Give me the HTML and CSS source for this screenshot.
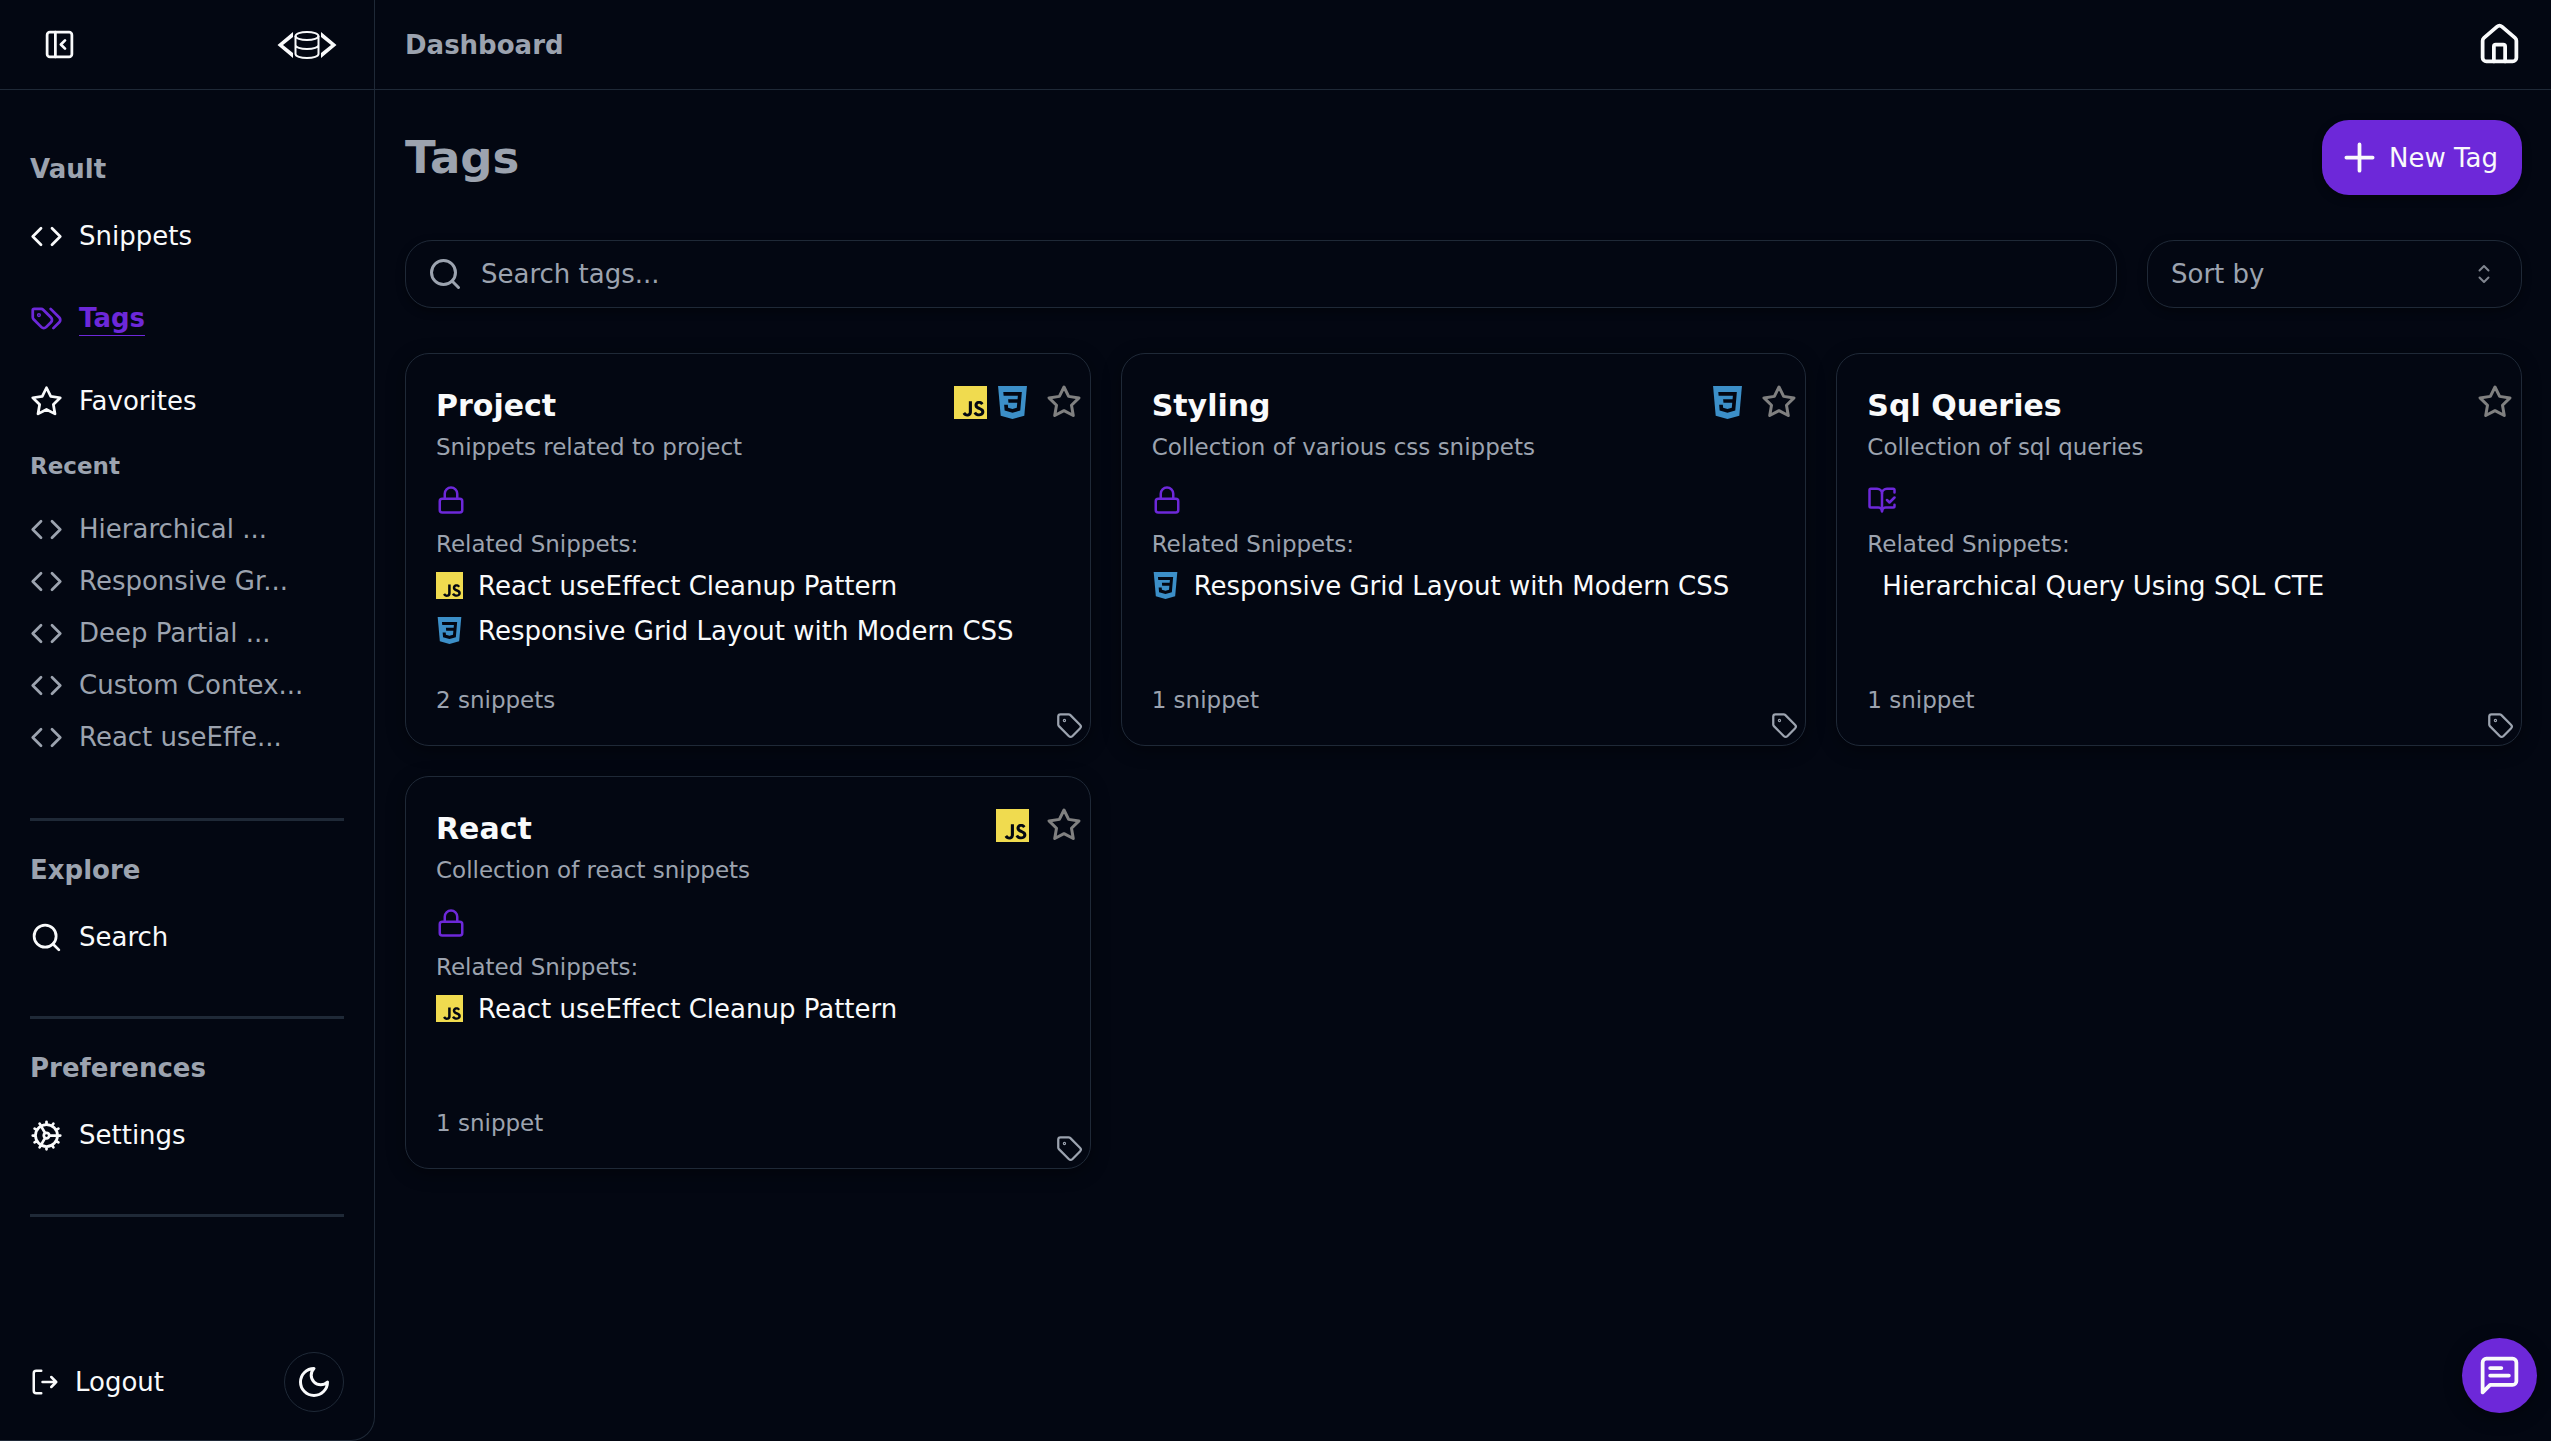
FILE: index.html
```html
<!DOCTYPE html>
<html lang="en">

<head>
    <meta charset="UTF-8">
    <meta name="viewport" content="width=device-width, initial-scale=1.0">
    <title>Tags</title>
    <link rel="stylesheet" href="styles.css">
</head>

<body>
    <!-- icon sprite -->
    <svg class="sprite" xmlns="http://www.w3.org/2000/svg">
        <symbol id="i-code" viewBox="0 0 24 24">
            <path d="m16 18 6-6-6-6M8 6l-6 6 6 6" />
        </symbol>
        <symbol id="i-tags" viewBox="0 0 24 24">
            <path d="m15 5 6.3 6.3a2.4 2.4 0 0 1 0 3.4L17 19" />
            <path d="M9.586 5.586A2 2 0 0 0 8.172 5H3a1 1 0 0 0-1 1v5.172a2 2 0 0 0 .586 1.414L8.29 18.29a2.426 2.426 0 0 0 3.42 0l3.58-3.58a2.426 2.426 0 0 0 0-3.42z" />
            <circle cx="6.5" cy="9.5" r=".5" />
        </symbol>
        <symbol id="i-star" viewBox="0 0 24 24">
            <path d="M12 2l3.09 6.26L22 9.27l-5 4.87 1.18 6.88L12 17.77l-6.18 3.25L7 14.14 2 9.27l6.91-1.01z" />
        </symbol>
        <symbol id="i-search" viewBox="0 0 24 24">
            <circle cx="11" cy="11" r="8" />
            <path d="m21 21-4.3-4.3" />
        </symbol>
        <symbol id="i-cog" viewBox="0 0 24 24">
            <path d="M12 20a8 8 0 1 0 0-16 8 8 0 0 0 0 16ZM12 14a2 2 0 1 0 0-4 2 2 0 0 0 0 4ZM12 2v2M12 22v-2M17 20.66l-1-1.73M11 10.27 7 3.34M20.66 17l-1.73-1M3.34 7l1.73 1M14 12h8M2 12h2M20.66 7l-1.73 1M3.34 17l1.73-1M17 3.34l-1 1.73M11 13.73l-4 6.93" />
        </symbol>
        <symbol id="i-lock" viewBox="0 0 24 24">
            <rect x="3" y="11" width="18" height="11" rx="2" />
            <path d="M7 11V7a5 5 0 0 1 10 0v4" />
        </symbol>
        <symbol id="i-book" viewBox="0 0 24 24">
            <path d="M12 21V7M16 12l2 2 4-4" />
            <path d="M22 6V4a1 1 0 0 0-1-1h-5a4 4 0 0 0-4 4 4 4 0 0 0-4-4H3a1 1 0 0 0-1 1v13a1 1 0 0 0 1 1h6a3 3 0 0 1 3 3 3 3 0 0 1 3-3h6a1 1 0 0 0 1-1v-1.3" />
        </symbol>
        <symbol id="i-tag" viewBox="0 0 24 24">
            <path d="M12.586 2.586A2 2 0 0 0 11.172 2H4a2 2 0 0 0-2 2v7.172a2 2 0 0 0 .586 1.414l8.704 8.704a2.426 2.426 0 0 0 3.42 0l6.58-6.58a2.426 2.426 0 0 0 0-3.42z" />
            <circle cx="7.5" cy="7.5" r=".5" />
        </symbol>
        <symbol id="i-js" viewBox="0 0 24 24">
            <path fill="#f0db4f" stroke="none" d="M0 0h24v24H0z" />
            <path fill="#030712" stroke="none" d="M22.034 18.276c-.175-1.095-.888-2.015-3.003-2.873-.736-.345-1.554-.585-1.797-1.14-.091-.33-.105-.51-.046-.705.15-.646.915-.84 1.515-.66.39.12.75.42.976.9 1.034-.676 1.034-.676 1.755-1.125-.27-.42-.404-.601-.586-.78-.63-.705-1.469-1.065-2.834-1.034l-.705.089c-.676.165-1.32.525-1.71 1.005-1.14 1.291-.811 3.541.569 4.471 1.365 1.02 3.361 1.244 3.616 2.205.24 1.17-.87 1.545-1.966 1.41-.811-.18-1.26-.586-1.755-1.336l-1.83 1.051c.21.48.45.689.81 1.109 1.74 1.756 6.09 1.666 6.871-1.004.029-.09.24-.705.074-1.65zm-8.983-7.245h-2.248c0 1.938-.009 3.864-.009 5.805 0 1.232.063 2.363-.138 2.711-.33.689-1.18.601-1.566.48-.396-.196-.597-.466-.83-.855-.063-.105-.11-.196-.127-.196l-1.825 1.125c.305.63.75 1.172 1.324 1.517.855.51 2.004.675 3.207.405.783-.226 1.458-.691 1.811-1.411.51-.93.402-2.07.397-3.346.012-2.054 0-4.109 0-6.179z" />
        </symbol>
        <symbol id="i-css" viewBox="0 0 24 24">
            <path fill="#3c8fc8" stroke="none" d="M1.5 0h21l-1.91 21.563L11.977 24l-8.565-2.438z" />
            <path fill="#030712" stroke="none" d="M5.3 4.4h13.5l-1.16 13.5-5.67 1.6-5.68-1.6-.37-4.2h2.7l.2 2.16 3.14.86 3.16-.86.33-3.66H9.05l-.24-2.64h6.88l.23-2.56H5.55z" />
        </symbol>
    </svg>

    <div class="wrapper">
        <aside class="sidebar">
            <div class="sidebarTop">
                <button class="iconBtn" aria-label="Collapse sidebar">
                    <svg class="icon" viewBox="0 0 24 24">
                        <rect x="3" y="3" width="18" height="18" rx="2" />
                        <path d="M9 3v18M16 15l-3-3 3-3" />
                    </svg>
                </button>
                <svg class="logo" viewBox="0 0 60 36">
                    <path class="solid" d="M16 5v5L6 18l10 8v5L.5 18zM44 5v5l10 8-10 8v5l15.5-13z" />
                    <ellipse cx="30" cy="9" rx="11.5" ry="4" />
                    <path d="M18.5 9v18c0 2.200 5 4 11.500 4s11.500-1.800 11.500-4V9M18.500 18c0 2.200 5 4 11.500 4s11.500-1.800 11.500-4" />
                </svg>
            </div>

            <nav class="menu">
                <section class="group">
                    <h2>Vault</h2>
                    <a class="navItem" href="#"><svg class="icon"><use href="#i-code" /></svg>Snippets</a>
                    <a class="navItem active" href="#"><svg class="icon"><use href="#i-tags" /></svg><span>Tags</span></a>
                    <a class="navItem" href="#"><svg class="icon"><use href="#i-star" /></svg>Favorites</a>
                    <h3>Recent</h3>
                    <ul class="recent">
                        <li><a href="#"><svg class="icon"><use href="#i-code" /></svg>Hierarchical ...</a></li>
                        <li><a href="#"><svg class="icon"><use href="#i-code" /></svg>Responsive Gr...</a></li>
                        <li><a href="#"><svg class="icon"><use href="#i-code" /></svg>Deep Partial ...</a></li>
                        <li><a href="#"><svg class="icon"><use href="#i-code" /></svg>Custom Contex...</a></li>
                        <li><a href="#"><svg class="icon"><use href="#i-code" /></svg>React useEffe...</a></li>
                    </ul>
                </section>
                <section class="group">
                    <h2>Explore</h2>
                    <a class="navItem" href="#"><svg class="icon"><use href="#i-search" /></svg>Search</a>
                </section>
                <section class="group">
                    <h2>Preferences</h2>
                    <a class="navItem" href="#"><svg class="icon"><use href="#i-cog" /></svg>Settings</a>
                </section>
            </nav>

            <div class="sidebarBottom">
                <button class="logoutBtn">
                    <svg class="icon icon30" viewBox="0 0 24 24">
                        <path d="M9 21H5a2 2 0 0 1-2-2V5a2 2 0 0 1 2-2h4M10 12h11M17 8l4 4-4 4" />
                    </svg>Logout
                </button>
                <button class="themeBtn" aria-label="Dark mode">
                    <svg class="icon icon36" viewBox="0 0 24 24">
                        <path d="M12 3a6 6 0 0 0 9 9 9 9 0 1 1-9-9Z" />
                    </svg>
                </button>
            </div>
        </aside>

        <div class="page">
            <header class="topbar">
                <span class="crumb">Dashboard</span>
                <a class="homeLink" href="#" aria-label="Home">
                    <svg class="icon icon45" viewBox="0 0 24 24">
                        <path d="M15 21v-8a1 1 0 0 0-1-1h-4a1 1 0 0 0-1 1v8" />
                        <path d="M3 10a2 2 0 0 1 .709-1.528l7-6a2 2 0 0 1 2.582 0l7 6A2 2 0 0 1 21 10v9a2 2 0 0 1-2 2H5a2 2 0 0 1-2-2z" />
                    </svg>
                </a>
            </header>

            <main class="content">
                <div class="titleRow">
                    <h1>Tags</h1>
                    <button class="newBtn">
                        <svg class="icon icon45" viewBox="0 0 24 24"><path d="M5 12h14M12 5v14" /></svg>New Tag
                    </button>
                </div>

                <div class="filters">
                    <div class="searchBox">
                        <svg class="icon icon36"><use href="#i-search" /></svg>
                        <input type="text" placeholder="Search tags..." aria-label="Search tags">
                    </div>
                    <div class="sortBox">
                        <select aria-label="Sort by">
                            <option>Sort by</option>
                        </select>
                        <svg class="icon sortIcon" viewBox="0 0 24 24"><path d="m7.5 15.5 4.5 4.5 4.5-4.5M7.5 8.5 12 4l4.5 4.5" /></svg>
                    </div>
                </div>

                <div class="cards">
                    <article class="card">
                        <div class="cardTools">
                            <svg class="lang"><use href="#i-js" /></svg>
                            <svg class="lang"><use href="#i-css" /></svg>
                            <button class="starBtn" aria-label="Add to favorites"><svg class="icon"><use href="#i-star" /></svg></button>
                        </div>
                        <h2>Project</h2>
                        <p class="desc">Snippets related to project</p>
                        <svg class="icon access"><use href="#i-lock" /></svg>
                        <p class="label">Related Snippets:</p>
                        <ul class="related">
                            <li><svg class="lang small"><use href="#i-js" /></svg><a href="#">React useEffect Cleanup Pattern</a></li>
                            <li><svg class="lang small"><use href="#i-css" /></svg><a href="#">Responsive Grid Layout with Modern CSS</a></li>
                        </ul>
                        <p class="count">2 snippets</p>
                        <svg class="icon tagMark"><use href="#i-tag" /></svg>
                    </article>

                    <article class="card">
                        <div class="cardTools">
                            <svg class="lang"><use href="#i-css" /></svg>
                            <button class="starBtn" aria-label="Add to favorites"><svg class="icon"><use href="#i-star" /></svg></button>
                        </div>
                        <h2>Styling</h2>
                        <p class="desc">Collection of various css snippets</p>
                        <svg class="icon access"><use href="#i-lock" /></svg>
                        <p class="label">Related Snippets:</p>
                        <ul class="related">
                            <li><svg class="lang small"><use href="#i-css" /></svg><a href="#">Responsive Grid Layout with Modern CSS</a></li>
                        </ul>
                        <p class="count">1 snippet</p>
                        <svg class="icon tagMark"><use href="#i-tag" /></svg>
                    </article>

                    <article class="card">
                        <div class="cardTools">
                            <button class="starBtn" aria-label="Add to favorites"><svg class="icon"><use href="#i-star" /></svg></button>
                        </div>
                        <h2>Sql Queries</h2>
                        <p class="desc">Collection of sql queries</p>
                        <svg class="icon access"><use href="#i-book" /></svg>
                        <p class="label">Related Snippets:</p>
                        <ul class="related">
                            <li><a href="#">Hierarchical Query Using SQL CTE</a></li>
                        </ul>
                        <p class="count">1 snippet</p>
                        <svg class="icon tagMark"><use href="#i-tag" /></svg>
                    </article>

                    <article class="card">
                        <div class="cardTools">
                            <svg class="lang"><use href="#i-js" /></svg>
                            <button class="starBtn" aria-label="Add to favorites"><svg class="icon"><use href="#i-star" /></svg></button>
                        </div>
                        <h2>React</h2>
                        <p class="desc">Collection of react snippets</p>
                        <svg class="icon access"><use href="#i-lock" /></svg>
                        <p class="label">Related Snippets:</p>
                        <ul class="related">
                            <li><svg class="lang small"><use href="#i-js" /></svg><a href="#">React useEffect Cleanup Pattern</a></li>
                        </ul>
                        <p class="count">1 snippet</p>
                        <svg class="icon tagMark"><use href="#i-tag" /></svg>
                    </article>
                </div>
            </main>
        </div>

        <button class="chatBtn" aria-label="Open chat">
            <svg class="icon icon45" viewBox="0 0 24 24">
                <path d="M21 15a2 2 0 0 1-2 2H7l-4 4V5a2 2 0 0 1 2-2h14a2 2 0 0 1 2 2zM13 8H7M17 12H7" />
            </svg>
        </button>
    </div>
</body>

</html>
```
FILE: styles.css
```css
* {
    margin: 0;
    padding: 0;
    box-sizing: border-box;
}

body {
    background: #030712;
    color: #f9fafb;
    font-family: "DejaVu Sans", sans-serif;
    font-size: 26px;
    line-height: 36px;
}

ul {
    list-style: none;
}

a {
    color: inherit;
    text-decoration: none;
}

button,
input,
select {
    font: inherit;
    color: inherit;
    background: none;
    border: none;
}

.sprite {
    display: none;
}

.icon {
    width: 33px;
    height: 33px;
    flex-shrink: 0;
    fill: none;
    stroke: currentColor;
    stroke-width: 2;
    stroke-linecap: round;
    stroke-linejoin: round;
}

.icon30 {
    width: 30px;
    height: 30px;
}

.icon36 {
    width: 36px;
    height: 36px;
}

.icon45 {
    width: 45px;
    height: 45px;
}

.wrapper {
    display: flex;
    min-height: 100vh;
}

/* sidebar */
.sidebar {
    width: 375px;
    flex-shrink: 0;
    display: flex;
    flex-direction: column;
    border-right: 1px solid #1f2937;
    border-bottom: 1px solid #1f2937;
    border-bottom-right-radius: 24px;
}

.sidebarTop {
    height: 90px;
    padding: 0 37px 0 43px;
    display: flex;
    align-items: center;
    justify-content: space-between;
    border-bottom: 1px solid #1f2937;
}

.iconBtn {
    display: flex;
}

.logo {
    width: 60px;
    height: 36px;
    fill: none;
    stroke: currentColor;
    stroke-width: 2;
}

.logo .solid {
    fill: currentColor;
    stroke: none;
}

.menu {
    padding: 30px;
    flex: 1;
}

.group {
    padding: 30px 0 38px;
    border-bottom: 3px solid #1f2937;
}

.group h2 {
    color: #9ca3af;
    font-size: 26px;
    line-height: 38px;
    margin-bottom: 7px;
}

.group h3 {
    color: #9ca3af;
    font-size: 23px;
    line-height: 30px;
    margin: 9px 0 30px;
}

.navItem {
    display: flex;
    align-items: center;
    gap: 16px;
    padding: 24px 0;
    line-height: 34px;
}

.active {
    color: #6d28d9;
    font-weight: bold;
}

.active span {
    border-bottom: 1px solid;
}

.recent {
    padding-bottom: 9px;
}

.recent a {
    display: flex;
    align-items: center;
    gap: 16px;
    color: #9ca3af;
    line-height: 36px;
    margin-bottom: 16px;
}

.sidebarBottom {
    display: flex;
    align-items: center;
    justify-content: space-between;
    padding: 0 30px 28px;
}

.logoutBtn {
    display: flex;
    align-items: center;
    gap: 15px;
}

.themeBtn {
    width: 60px;
    height: 60px;
    display: flex;
    align-items: center;
    justify-content: center;
    border: 1px solid #1f2937;
    border-radius: 50%;
}

/* page */
.page {
    flex: 1;
    min-width: 0;
}

.topbar {
    height: 90px;
    padding: 0 29px 0 30px;
    display: flex;
    align-items: center;
    justify-content: space-between;
    border-bottom: 1px solid #1f2937;
}

.crumb {
    color: #9ca3af;
    font-weight: bold;
}

.homeLink {
    display: flex;
}

.content {
    padding: 30px 29px 30px 30px;
}

.titleRow {
    display: flex;
    align-items: center;
    justify-content: space-between;
    margin-bottom: 45px;
}

.titleRow h1 {
    color: #9ca3af;
    font-size: 45px;
    line-height: 54px;
}

.newBtn {
    height: 75px;
    padding: 0 24px 0 15px;
    display: flex;
    align-items: center;
    gap: 7px;
    background: #6d28d9;
    border-radius: 27px;
    box-shadow: 0 3px 9px #0006;
}

.filters {
    display: flex;
    gap: 30px;
    margin-bottom: 45px;
}

.searchBox,
.sortBox {
    height: 68px;
    display: flex;
    align-items: center;
    border: 1px solid #1f2937;
    border-radius: 27px;
    color: #9ca3af;
    box-shadow: 0 3px 9px #0006;
}

.searchBox {
    flex: 1;
    gap: 18px;
    padding: 0 21px;
}

.searchBox input {
    flex: 1;
    outline: none;
}

.searchBox input::placeholder {
    color: #9ca3af;
    opacity: 1;
}

.sortBox {
    position: relative;
    width: 375px;
}

.sortBox select {
    width: 100%;
    height: 100%;
    padding: 0 23px;
    appearance: none;
}

.sortIcon {
    position: absolute;
    right: 25px;
    width: 24px;
    height: 24px;
    color: #80858f;
    pointer-events: none;
}

/* cards */
.cards {
    display: grid;
    grid-template-columns: repeat(3, 1fr);
    gap: 30px;
}

.card {
    position: relative;
    min-height: 393px;
    padding: 30px;
    display: flex;
    flex-direction: column;
    border: 1px solid #1f2937;
    border-radius: 24px;
    box-shadow: 0 4px 18px #0006;
}

.card h2 {
    font-size: 30px;
    line-height: 44px;
}

.card p {
    color: #9ca3af;
    font-size: 23px;
    line-height: 30px;
}

.card .desc {
    margin-top: 4px;
}

.cardTools {
    position: absolute;
    top: 30px;
    right: 8px;
    display: flex;
    align-items: center;
    gap: 9px;
}

.lang {
    width: 33px;
    height: 33px;
}

.small {
    width: 27px;
    height: 27px;
}

.starBtn {
    display: flex;
    margin-left: 8px;
    color: #808080;
}

.starBtn .icon {
    width: 36px;
    height: 36px;
}

.access {
    width: 30px;
    height: 30px;
    margin: 23px 0 14px;
    color: #6d28d9;
}

.related {
    margin-top: 4px;
}

.related li {
    display: flex;
    align-items: center;
    height: 45px;
}

.related a {
    margin-left: 15px;
}

.card .count {
    margin-top: auto;
}

.tagMark {
    position: absolute;
    right: 7px;
    bottom: 6px;
    width: 27px;
    height: 27px;
    color: #9ca3af;
}

.chatBtn {
    position: fixed;
    right: 14px;
    bottom: 28px;
    width: 75px;
    height: 75px;
    display: flex;
    align-items: center;
    justify-content: center;
    background: #6d28d9;
    border-radius: 50%;
    box-shadow: 0 4px 18px #0006;
}
```
